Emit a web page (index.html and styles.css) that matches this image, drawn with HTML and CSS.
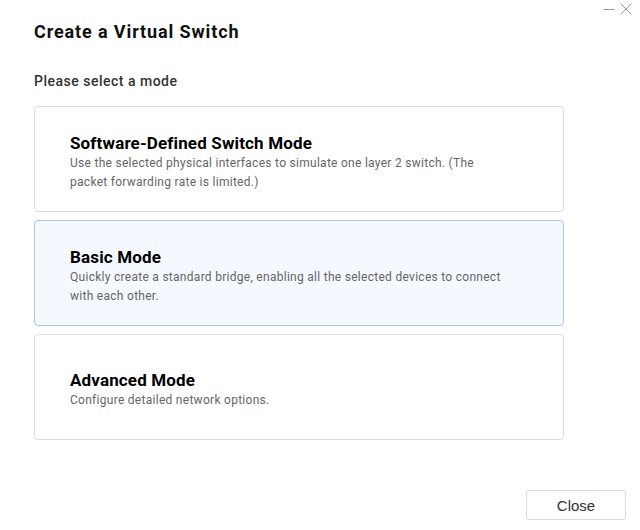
FILE: index.html
```html
<!DOCTYPE html>
<html>
<head>
<meta charset="utf-8">
<link rel="stylesheet" href="styles.css">
</head>
<body>
<div class="dialog">
  <div class="win-controls">
    <svg class="ctl" width="12" height="12" viewBox="0 0 12 12"><path d="M0.5 6.5H11.5" stroke="#9a9a9a" stroke-width="1"/></svg>
    <svg class="ctl" width="12" height="12" viewBox="0 0 12 12"><path d="M0.5 0.5L11.5 11.5M11.5 0.5L0.5 11.5" stroke="#9a9a9a" stroke-width="1"/></svg>
  </div>
  <h1 class="title">Create a Virtual Switch</h1>
  <div class="label">Please select a mode</div>
  <div class="modes">
    <div class="mode">
      <div class="mode-title">Software-Defined Switch Mode</div>
      <div class="mode-desc">Use the selected physical interfaces to simulate one layer 2 switch. (The packet forwarding rate is limited.)</div>
    </div>
    <div class="mode selected">
      <div class="mode-title">Basic Mode</div>
      <div class="mode-desc">Quickly create a standard bridge, enabling all the selected devices to connect with each other.</div>
    </div>
    <div class="mode">
      <div class="mode-title">Advanced Mode</div>
      <div class="mode-desc">Configure detailed network options.</div>
    </div>
  </div>
  <div class="footer">
    <button class="btn">Close</button>
  </div>
</div>
</body>
</html>
```
FILE: styles.css
```css
html, body {
  margin: 0;
  padding: 0;
  background: #fff;
}
body {
  width: 640px;
  height: 530px;
  font-family: Roboto, "Liberation Sans", sans-serif;
  overflow: hidden;
}
.dialog {
  position: relative;
  padding: 20px 76px 0 34px;
}
.win-controls {
  position: absolute;
  top: 3px;
  right: 8px;
  display: flex;
  gap: 5px;
}
.ctl { display: block; }
.title {
  margin: 0;
  font-size: 18px;
  line-height: 24px;
  font-weight: 700;
  letter-spacing: 0.88px;
  color: #111;
}
.label {
  margin-top: 27px;
  font-size: 14px;
  line-height: 20px;
  font-weight: 500;
  letter-spacing: 0.5px;
  color: #333;
}
.modes {
  margin-top: 15px;
  display: flex;
  flex-direction: column;
  gap: 8px;
}
.mode {
  box-sizing: content-box;
  border: 1px solid #dcdcdc;
  border-radius: 4px;
  padding: 6px 50px 0 35px;
  height: 98px;
  display: flex;
  flex-direction: column;
  justify-content: center;
  background: #fff;
}
.mode.selected {
  border-color: #a3c9ef;
  background: #f4f9ff;
}
.mode-title {
  font-size: 17px;
  line-height: 21px;
  font-weight: 700;
  letter-spacing: 0.15px;
  color: #000;
}
.mode-desc {
  font-size: 12px;
  line-height: 19px;
  letter-spacing: 0.28px;
  color: #666;
}
.footer {
  display: flex;
  justify-content: flex-end;
  margin-top: 50px;
  margin-right: -62px;
}
.btn {
  width: 100px;
  height: 30px;
  border: 1px solid #dcdcdc;
  border-radius: 3px;
  background: #fff;
  font-family: "Liberation Sans", Arial, sans-serif;
  font-size: 15px;
  color: #333;
  padding: 0;
}
```
